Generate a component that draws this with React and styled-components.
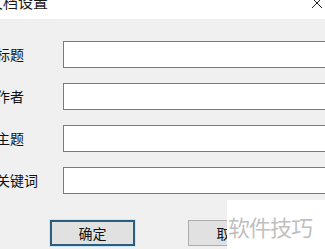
import React from "react";
import styled, { createGlobalStyle } from "styled-components";

const Global = createGlobalStyle`
  html, body { margin: 0; padding: 0; background: #f0f0f0; }
  body { font-family: "Noto Sans CJK SC", "Noto Sans", sans-serif; }
`;

const Window = styled.div`
  position: relative;
  width: 325px;
  height: 249px;
  overflow: hidden;
  background: #f0f0f0;
  display: flex;
  flex-direction: column;
`;

const TitleBar = styled.div`
  height: 19px;
  flex: none;
  background: #ffffff;
  display: flex;
  justify-content: space-between;
  align-items: flex-start;
  overflow: hidden;
`;

const Title = styled.div`
  margin: -8px 0 0 -12px;
  font-size: 15px;
  line-height: 20px;
  color: #1a1a1a;
  white-space: nowrap;
`;

const Close = styled.svg`
  margin: -3px 2px 0 0;
  width: 12px;
  height: 12px;
  flex: none;
`;

const Body = styled.div`
  display: flex;
  flex-direction: column;
  padding: 22px 0 0 0;
`;

const Form = styled.div`
  display: grid;
  grid-template-columns: 67px 300px;
  row-gap: 15px;
  margin-left: -4px;
`;

const Label = styled.label`
  font-size: 14px;
  line-height: 26px;
  color: #111;
  white-space: nowrap;
`;

const Input = styled.div`
  height: 27px;
  box-sizing: border-box;
  background: #ffffff;
  border: 1px solid #7a7a7a;
`;

const Buttons = styled.div`
  display: flex;
  margin: 26px 0 0 50px;
  gap: 53px;
`;

const Button = styled.button`
  width: 85px;
  height: 26px;
  box-sizing: border-box;
  padding: 0;
  background: #e1e1e1;
  border: ${(p) => (p.$primary ? "2px solid #2b5d80" : "1px solid #adadad")};
  box-shadow: ${(p) => (p.$primary ? "0 0 0 1px #cce4f7" : "none")};
  font-family: "Noto Sans CJK SC", sans-serif;
  font-size: 14px;
  color: #111;
  line-height: 22px;
`;

const Watermark = styled.div`
  position: absolute;
  left: 227px;
  top: 200px;
  right: 0;
  bottom: 0;
  background: #ffffff;
  display: flex;
  align-items: flex-start;
  padding: 10px 0 0 1px;
  box-sizing: border-box;
  font-size: 22px;
  line-height: 32px;
  color: #bfbfbf;
  letter-spacing: -1px;
  white-space: nowrap;
`;

const fields = ["标题", "作者", "主题", "关键词"];

export default function App() {
  return (
    <>
      <Global />
      <Window>
        <TitleBar>
          <Title>文档设置</Title>
          <Close viewBox="0 0 12 12">
            <path d="M1 1 L11 11 M11 1 L1 11" stroke="#222" strokeWidth="1" fill="none" />
          </Close>
        </TitleBar>
        <Body>
          <Form>
            {fields.map((f) => (
              <React.Fragment key={f}>
                <Label>{f}</Label>
                <Input />
              </React.Fragment>
            ))}
          </Form>
          <Buttons>
            <Button $primary>确定</Button>
            <Button>取消</Button>
          </Buttons>
        </Body>
        <Watermark>软件技巧</Watermark>
      </Window>
    </>
  );
}
